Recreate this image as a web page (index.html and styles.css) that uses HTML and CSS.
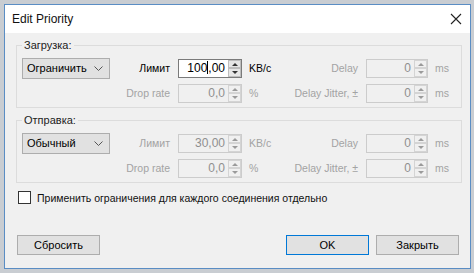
FILE: index.html
```html
<!DOCTYPE html>
<html lang="ru">
<head>
    <meta charset="UTF-8">
    <title>Edit Priority</title>
    <link rel="stylesheet" href="styles.css">
</head>
<body>

    <div class="window">
        <div class="titlebar">
            <span class="title">Edit Priority</span>
            <svg class="close" width="12" height="12" viewBox="0 0 12 12">
                <path d="M1 1 L11 11 M11 1 L1 11" stroke="#222" stroke-width="1.1" fill="none"/>
            </svg>
        </div>

        <div class="content">
            <!-- загрузка -->
            <fieldset class="group">
                <legend>Загрузка:</legend>
                <div class="rows">
                    <div class="combo">Ограничить
                        <svg class="chev" width="9" height="6" viewBox="0 0 9 6"><path d="M0.5 0.5 L4.5 4.5 L8.5 0.5" stroke="#555" fill="none"/></svg>
                    </div>
                    <span class="lbl">Лимит</span>
                    <div class="spin on"><span class="val">100<i class="caret"></i>,00</span><span class="arrows"><b class="up"></b><b class="down"></b></span></div>
                    <span class="unit">KB/c</span>
                    <span class="lbl off">Delay</span>
                    <div class="spin"><span class="val">0</span><span class="arrows"><b class="up"></b><b class="down"></b></span></div>
                    <span class="unit off">ms</span>

                    <span></span>
                    <span class="lbl off">Drop rate</span>
                    <div class="spin"><span class="val">0,0</span><span class="arrows"><b class="up"></b><b class="down"></b></span></div>
                    <span class="unit off">%</span>
                    <span class="lbl off">Delay Jitter, ±</span>
                    <div class="spin"><span class="val">0</span><span class="arrows"><b class="up"></b><b class="down"></b></span></div>
                    <span class="unit off">ms</span>
                </div>
            </fieldset>

            <!-- отправка -->
            <fieldset class="group">
                <legend>Отправка:</legend>
                <div class="rows">
                    <div class="combo">Обычный
                        <svg class="chev" width="9" height="6" viewBox="0 0 9 6"><path d="M0.5 0.5 L4.5 4.5 L8.5 0.5" stroke="#555" fill="none"/></svg>
                    </div>
                    <span class="lbl off">Лимит</span>
                    <div class="spin"><span class="val">30,00</span><span class="arrows"><b class="up"></b><b class="down"></b></span></div>
                    <span class="unit off">KB/c</span>
                    <span class="lbl off">Delay</span>
                    <div class="spin"><span class="val">0</span><span class="arrows"><b class="up"></b><b class="down"></b></span></div>
                    <span class="unit off">ms</span>

                    <span></span>
                    <span class="lbl off">Drop rate</span>
                    <div class="spin"><span class="val">0,0</span><span class="arrows"><b class="up"></b><b class="down"></b></span></div>
                    <span class="unit off">%</span>
                    <span class="lbl off">Delay Jitter, ±</span>
                    <div class="spin"><span class="val">0</span><span class="arrows"><b class="up"></b><b class="down"></b></span></div>
                    <span class="unit off">ms</span>
                </div>
            </fieldset>

            <div class="check">
                <span class="box"></span>
                <span>Применить ограничения для каждого соединения отдельно</span>
            </div>

            <div class="buttons">
                <button class="btn">Сбросить</button>
                <span class="spacer"></span>
                <button class="btn default">OK</button>
                <button class="btn">Закрыть</button>
            </div>
        </div>
    </div>

</body>
</html>
```

FILE: styles.css
```css
body {
    margin: 0;
    background-color: #c9cdd2;
    font-family: "Liberation Sans", Arial, sans-serif;
    font-size: 10.5px;
    color: #000;
}

.window {
    margin: 4px 0 0 4px;
    width: 465px;
    height: 263px;
    border: 1px solid #5a8dc4;
    background: #f0f0f0;
    display: flex;
    flex-direction: column;
}

.titlebar {
    height: 28px;
    background: #fff;
    display: flex;
    align-items: center;
    padding: 0 8px 0 7px;
}

.title { flex: 1; font-size: 12px; color: #111; }

.content {
    flex: 1;
    display: flex;
    flex-direction: column;
    padding: 5px 8px 13px 11px;
}

.group {
    margin: 0;
    padding: 5px 4px 4px 5px;
    border: 1px solid #dcdcdc;
    min-width: 0;
}

.group + .group { margin-top: 5px; }

.group legend {
    padding: 0 2px;
    color: #222;
    line-height: 15px;
    font-size: 11px;
}

.rows {
    display: grid;
    grid-template-columns: 88px 68px 64px 50px 74px 62px 1fr;
    grid-auto-rows: 20px;
    row-gap: 5px;
    align-items: center;
    white-space: nowrap;
}

.combo {
    height: 21px;
    box-sizing: border-box;
    border: 1px solid #adadad;
    background: #e1e1e1;
    display: flex;
    align-items: center;
    padding-left: 4px;
    position: relative;
    font-size: 11px;
}

.chev { position: absolute; right: 6px; top: 7px; }

.lbl { text-align: right; padding-right: 8px; }
.unit { padding-left: 7px; }
.off { color: #a3a3a3; }

.spin {
    height: 19px;
    box-sizing: border-box;
    border: 1px solid #cccccc;
    background: #f0f0f0;
    display: flex;
    color: #8f8f8f;
}

.spin.on { border-color: #7a7a7a; background: #fff; color: #000; }

.val {
    flex: 1;
    text-align: right;
    padding-right: 3px;
    line-height: 17px;
    font-size: 12px;
}

.caret {
    display: inline-block;
    width: 1px;
    height: 13px;
    background: #000;
    vertical-align: -2px;
}

.arrows {
    width: 13px;
    display: flex;
    flex-direction: column;
}

.arrows b {
    flex: 1;
    background: #f0f0f0;
    border: 1px solid #d4d4d4;
    position: relative;
}

.spin.on .arrows b { background: #e6e6e6; border-color: #bdbdbd; }

.arrows b::after {
    content: "";
    position: absolute;
    left: 3px;
    border-left: 3px solid transparent;
    border-right: 3px solid transparent;
}

.arrows .up::after { top: 2px; border-bottom: 3px solid #9a9a9a; }
.arrows .down::after { top: 2px; border-top: 3px solid #9a9a9a; }
.spin.on .arrows .up::after { border-bottom-color: #333; }
.spin.on .arrows .down::after { border-top-color: #333; }

.check {
    display: flex;
    align-items: center;
    margin: 8px 0 0 2px;
    color: #111;
}

.box {
    width: 11px;
    height: 11px;
    border: 1px solid #333;
    background: #fff;
    margin-right: 6px;
}

.buttons {
    margin-top: auto;
    display: flex;
    padding-left: 1px;
    padding-right: 3px;
}

.spacer { flex: 1; }

.btn {
    width: 83px;
    height: 20px;
    border: 1px solid #adadad;
    background: #e1e1e1;
    font-family: inherit;
    font-size: 11px;
    color: #000;
    padding: 0;
}

.btn.default { border: 1px solid #0078d7; margin-right: 7px; }
```
